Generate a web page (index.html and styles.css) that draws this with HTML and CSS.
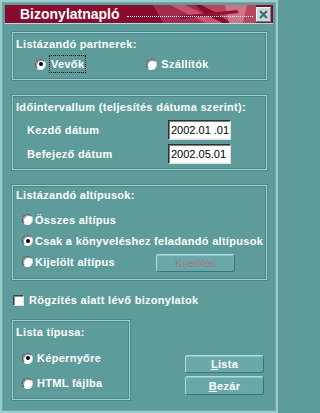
FILE: index.html
```html
<!DOCTYPE html>
<html>
<head>
<meta charset="utf-8">
<link rel="stylesheet" href="styles.css">
</head>
<body>
<div class="window">
  <div class="titlebar">
    <svg class="deco" width="268" height="18" viewBox="0 0 268 18">
      <polygon points="148,0 190,0 210,18 158,18" fill="#a32b4b"/>
      <polygon points="165,0 180,0 218,18 200,18" fill="#c4546f"/>
      <polygon points="196,0 251,0 251,18 226,18 210,7" fill="#b9465f"/>
      <polygon points="220,0 242,0 238,18 224,18" fill="#d0748a"/>
      <polygon points="172,11 232,5 234,8 176,14" fill="#8e1434"/>
    </svg>
    <span class="title">Bizonylatnapló</span>
    <span class="dots"></span>
    <span class="close">
      <svg width="9" height="9" viewBox="0 0 9 9"><path d="M1 1 L8 8 M8 1 L1 8" stroke="#3d6a76" stroke-width="2.2"/></svg>
    </span>
  </div>
  <div class="content">
    <div class="group g1">
      <div class="glabel">Listázandó partnerek:</div>
      <div class="prow">
        <label class="opt o-vevok"><span class="radio on"></span><span class="focus">Vevők</span></label>
        <label class="opt o-szall"><span class="radio"></span><span>Szállítók</span></label>
      </div>
    </div>
    <div class="group g2">
      <div class="glabel">Időintervallum (teljesítés dátuma szerint):</div>
      <div class="drow"><span class="dlabel">Kezdő dátum</span><span class="input">2002.01 .01</span></div>
      <div class="drow"><span class="dlabel">Befejező dátum</span><span class="input">2002.05.01</span></div>
    </div>
    <div class="group g3">
      <div class="glabel">Listázandó altípusok:</div>
      <div class="arow"><span class="radio"></span><span>Összes altípus</span></div>
      <div class="arow"><span class="radio on"></span><span>Csak a könyveléshez feladandó altípusok</span></div>
      <div class="arow krow"><span class="radio"></span><span>Kijelölt altípus</span><span class="btn disabled">Kijelölés</span></div>
    </div>
    <div class="checkrow"><span class="check"></span><span>Rögzítés alatt lévő bizonylatok</span></div>
    <div class="bottom">
      <div class="group g4">
        <div class="glabel">Lista típusa:</div>
        <div class="lrow"><span class="radio on"></span><span>Képernyőre</span></div>
        <div class="lrow"><span class="radio"></span><span>HTML fájlba</span></div>
      </div>
      <div class="buttons">
        <span class="btn b-lista"><u>L</u>ista</span>
        <span class="btn b-bezar"><u>B</u>ezár</span>
      </div>
    </div>
  </div>
</div>
</body>
</html>
```
FILE: styles.css
```css
html, body {
  margin: 0;
  padding: 0;
  background: #5e9b9b;
}
.window {
  width: 278px;
  height: 413px;
  box-sizing: border-box;
  border: 2px solid #9ccccc;
  box-shadow: inset 0 0 0 1px #6fa9a9;
  background: #5e9b9b;
  font-family: "Liberation Sans", Arial, sans-serif;
  font-size: 11px;
  font-weight: bold;
  letter-spacing: 0.3px;
  color: #ffffff;
  display: flex;
  flex-direction: column;
}
.titlebar {
  position: relative;
  margin: 3px 3px 0 3px;
  height: 18px;
  border-bottom: 1px solid #b6dada;
  background: #880a2c;
  display: flex;
  align-items: center;
  overflow: hidden;
}
.deco {
  position: absolute;
  left: 0;
  top: 0;
}
.title {
  position: relative;
  margin-left: 15px;
  font-size: 14px;
  font-weight: bold;
  color: #ffffff;
  letter-spacing: 0;
}
.dots {
  position: relative;
  flex: 1;
  margin: 0 3px 0 7px;
  height: 0;
  border-bottom: 1px dotted #ffffff;
  align-self: center;
  transform: translateY(2px);
}
.close {
  position: relative;
  width: 13px;
  height: 13px;
  margin-right: 2px;
  background: #c6dcdc;
  border: 1px solid;
  border-color: #eef6f6 #6c8c8c #6c8c8c #eef6f6;
  display: flex;
  align-items: center;
  justify-content: center;
}
.content {
  margin: 8px 9px 0 10px;
  display: flex;
  flex-direction: column;
}
.group {
  box-sizing: border-box;
  border: 1px solid #a4d4d4;
  box-shadow: inset 0 0 0 1px #4d8686, 0 0 0 1px #4d8686;
  padding: 0 2px;
}
.glabel {
  height: 14px;
  line-height: 14px;
  margin-left: 1px;
}
.g1 {
  height: 48px;
  padding-top: 4px;
}
.prow {
  margin-top: 5px;
  height: 16px;
  display: flex;
  align-items: center;
}
.opt {
  display: flex;
  align-items: center;
  gap: 4px;
}
.o-vevok {
  margin-left: 20px;
}
.o-szall {
  margin-left: 61px;
}
.focus {
  outline: 1px dotted #000000;
  outline-offset: 0;
  padding: 2px 1px;
  line-height: 12px;
}
.radio {
  position: relative;
  display: inline-block;
  flex: none;
  width: 11px;
  height: 11px;
  box-sizing: border-box;
  border-radius: 50%;
  background: #ffffff;
  border: 1px solid;
  border-color: #5a5a5a #d8d8d8 #ffffff #5a5a5a;
  box-shadow: inset 1px 1px 0 #9a9a9a;
}
.radio.on::after {
  content: "";
  position: absolute;
  left: 2.5px;
  top: 2.5px;
  width: 4px;
  height: 4px;
  border-radius: 50%;
  background: #000000;
}
.g2 {
  margin-top: 15px;
  height: 75px;
  padding-top: 4px;
}
.drow {
  height: 20px;
  display: flex;
  align-items: center;
  margin-top: 4px;
}
.g2 .glabel + .drow {
  margin-top: 6px;
}
.dlabel {
  width: 141px;
  margin-left: 12px;
}
.input {
  box-sizing: border-box;
  width: 63px;
  height: 20px;
  background: #ffffff;
  border: 1px solid;
  border-color: #303030 #e0e0e0 #e0e0e0 #303030;
  box-shadow: inset 1px 1px 0 #808080;
  color: #000000;
  font-weight: normal;
  font-size: 11px;
  letter-spacing: 0;
  line-height: 18px;
  padding-left: 2px;
}
.g3 {
  margin-top: 15px;
  height: 95px;
  padding-top: 2px;
}
.g3 .glabel + .arow {
  margin-top: 7px;
}
.arow {
  height: 21px;
  display: flex;
  align-items: center;
  gap: 2px;
  padding-left: 7px;
}
.arow.krow {
  display: grid;
  grid-template-columns: 11px 119px 79px;
  column-gap: 2px;
  align-items: center;
  justify-content: start;
}
.btn {
  box-sizing: border-box;
  display: flex;
  align-items: center;
  justify-content: center;
  width: 79px;
  height: 18px;
  background: #6aa9a9;
  border: 1px solid;
  border-color: #b0dcdc #3e7474 #3e7474 #b0dcdc;
  border-radius: 3px;
  box-shadow: inset 0 1px 0 #8cc2c2;
  color: #ffffff;
  font-weight: bold;
}
.btn.disabled {
  margin-top: 2px;
  color: #a47882;
  font-weight: normal;
  letter-spacing: 0;
}
.checkrow {
  margin-top: 14px;
  height: 12px;
  display: flex;
  align-items: center;
  gap: 5px;
  margin-left: 1px;
}
.check {
  box-sizing: border-box;
  width: 11px;
  height: 11px;
  background: #ffffff;
  border: 1px solid;
  border-color: #404040 #e0e0e0 #e0e0e0 #404040;
  box-shadow: inset 1px 1px 0 #909090;
}
.bottom {
  margin-top: 14px;
  display: flex;
}
.g4 {
  width: 118px;
  height: 80px;
  padding-top: 4px;
}
.g4 .glabel + .lrow {
  margin-top: 11px;
}
.lrow {
  height: 16px;
  display: flex;
  align-items: center;
  gap: 4px;
  padding-left: 7px;
}
.lrow + .lrow {
  margin-top: 9px;
}
.buttons {
  margin-left: auto;
  margin-right: 3px;
  align-self: flex-end;
  margin-bottom: 5px;
  display: flex;
  flex-direction: column;
  gap: 3px;
}
.b-lista {
  height: 18px;
}
.b-bezar {
  height: 19px;
}
.btn u {
  text-decoration: underline;
}
```
